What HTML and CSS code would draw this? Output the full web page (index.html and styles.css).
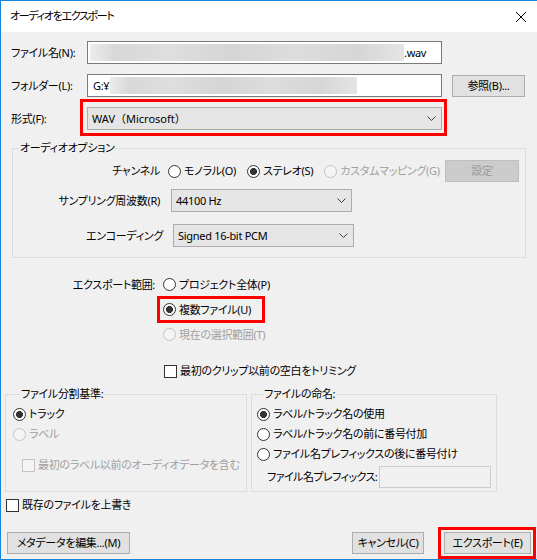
FILE: index.html
```html
<!DOCTYPE html>
<html lang="ja">
<head>
<meta charset="utf-8">
<title>オーディオをエクスポート</title>
<link rel="stylesheet" href="styles.css">
</head>
<body>
<div class="dialog">
  <div class="titlebar">
    <span class="title">オーディオをエクスポート</span>
    <svg class="close" viewBox="0 0 10 10"><path d="M0 0L10 10M10 0L0 10"/></svg>
  </div>
  <div class="body">
    <div class="file-grid">
      <span class="flabel">ファイル名(N):</span>
      <div class="textbox"><span class="blur blur-name"></span><span>.wav</span></div>
      <span></span>
      <span class="flabel">フォルダー(L):</span>
      <div class="textbox"><span class="drive">G:¥</span><span class="blur blur-folder"></span></div>
      <div class="btn btn-browse">参照(B)...</div>
      <span class="flabel">形式(F):</span>
      <div class="combo"><span class="ctext ctext-format">WAV（Microsoft）</span><svg class="chev" viewBox="0 0 9 5"><path d="M.5.5L4.5 4.5L8.5.5"/></svg></div>
    </div>

    <fieldset class="group audio">
      <legend>オーディオオプション</legend>
      <div class="orow orow-channel">
        <span class="olabel">チャンネル</span>
        <span class="opt opt-first"><i class="rb"></i>モノラル(O)</span>
        <span class="opt"><i class="rb on"></i>ステレオ(S)</span>
        <span class="opt dis"><i class="rb"></i>カスタムマッピング(G)</span>
        <div class="btn btn-dis btn-settings">設定</div>
      </div>
      <div class="orow orow-rate">
        <span class="olabel">サンプリング周波数(R)</span>
        <div class="combo combo-rate"><span class="ctext">44100 Hz</span><svg class="chev" viewBox="0 0 9 5"><path d="M.5.5L4.5 4.5L8.5.5"/></svg></div>
      </div>
      <div class="orow orow-enc">
        <span class="olabel olabel-enc">エンコーディング</span>
        <div class="combo combo-enc"><span class="ctext">Signed 16-bit PCM</span><svg class="chev" viewBox="0 0 9 5"><path d="M.5.5L4.5 4.5L8.5.5"/></svg></div>
      </div>
    </fieldset>

    <div class="range">
      <span class="rlabel">エクスポート範囲:</span>
      <div class="ropts">
        <span class="ritem"><i class="rb"></i>プロジェクト全体(P)</span>
        <span class="ritem"><i class="rb on"></i>複数ファイル(U)</span>
        <span class="ritem dis"><i class="rb"></i>現在の選択範囲(T)</span>
      </div>
    </div>

    <div class="check trim"><i class="cb"></i>最初のクリップ以前の空白をトリミング</div>

    <div class="split-row">
      <fieldset class="group split">
        <legend>ファイル分割基準:</legend>
        <div class="grow"><i class="rb on"></i>トラック</div>
        <div class="grow dis"><i class="rb"></i>ラベル</div>
        <div class="grow dis sub"><i class="cb"></i>最初のラベル以前のオーディオデータを含む</div>
      </fieldset>
      <fieldset class="group naming">
        <legend>ファイルの命名:</legend>
        <div class="grow"><i class="rb on"></i>ラベル/トラック名の使用</div>
        <div class="grow"><i class="rb"></i>ラベル/トラック名の前に番号付加</div>
        <div class="grow"><i class="rb"></i>ファイル名プレフィックスの後に番号付け</div>
        <div class="prefix-row">
          <span class="prefix-label">ファイル名プレフィックス:</span>
          <div class="textbox textbox-dis"></div>
        </div>
      </fieldset>
    </div>

    <div class="check overwrite"><i class="cb"></i>既存のファイルを上書き</div>

    <div class="buttons">
      <div class="btn btn-meta">メタデータを編集...(M)</div>
      <div class="btn btn-cancel">キャンセル(C)</div>
      <div class="btn btn-export">エクスポート(E)</div>
    </div>
  </div>

  <div class="hl hl-format"></div>
  <div class="hl hl-multi"></div>
  <div class="hl hl-export"></div>
</div>
</body>
</html>
```

FILE: styles.css
```css
* { box-sizing: border-box; }
html, body { margin: 0; padding: 0; background: #fff; }
body {
  font-family: "Noto Sans", "Noto Sans CJK JP", sans-serif;
  font-size: 11px;
  letter-spacing: -0.3px;
  line-height: 16px;
  color: #000;
  font-feature-settings: "palt";
}
.dialog {
  position: relative;
  width: 537px;
  height: 560px;
  border: 1px solid #1883d7;
  border-right: 0;
  background: #f0f0f0;
  display: flex;
  flex-direction: column;
}
.titlebar {
  flex: none;
  height: 31px;
  background: #fff;
  display: flex;
  align-items: center;
  padding: 0 0 2px 9px;
}
.title {
  letter-spacing: -1.3px;
}
.close {
  width: 10px;
  height: 10px;
  margin-left: auto;
  margin-right: 11px;
  margin-top: 2px;
  stroke: #000;
  stroke-width: 1;
  fill: none;
  overflow: visible;
}
.body {
  flex: 1;
  display: flex;
  flex-direction: column;
  padding-top: 9px;
}

/* top grid */
.file-grid {
  display: grid;
  grid-template-columns: 66px 355px 73px;
  grid-template-rows: 23px 23px 23px;
  column-gap: 10px;
  row-gap: 10px;
  margin-left: 10px;
  align-items: center;
  white-space: nowrap;
}
.textbox {
  height: 23px;
  background: #fff;
  border: 1px solid #7a7a7a;
  display: flex;
  align-items: center;
  padding-left: 2px;
  overflow: hidden;
  white-space: nowrap;
}
.textbox-dis {
  border-color: #cccccc;
  background: #f0f0f0;
}
.blur {
  display: block;
  height: 17px;
  background: linear-gradient(90deg, #ececec 0%, #d8d8d8 8%, #dedede 25%, #d5d5d5 45%, #dddddd 65%, #d6d6d6 85%, #e4e4e4 100%);
}
.blur-name { width: 314px; }
.blur-folder { width: 247px; margin-left: 1px; }
.drive { margin-left: 3px; }
.combo {
  height: 23px;
  background: #e5e5e5;
  border: 1px solid #acacac;
  display: flex;
  align-items: center;
  padding-left: 4px;
  white-space: nowrap;
}
.ctext-format {
  font-feature-settings: normal;
  letter-spacing: 0;
}
.chev {
  width: 9px;
  height: 5px;
  margin-left: auto;
  margin-right: 5px;
  fill: none;
  stroke: #404040;
  stroke-width: 1;
}
.btn {
  height: 22px;
  background: #e1e1e1;
  border: 1px solid #adadad;
  display: flex;
  align-items: center;
  justify-content: center;
  white-space: nowrap;
}
.btn-browse { align-self: end; }
.btn-dis {
  background: #cccccc;
  border-color: #bfbfbf;
  color: #9a9a9a;
}

/* group boxes */
.group {
  margin: 0;
  padding: 0;
  min-width: 0;
  border: 1px solid #dcdcdc;
}
.group legend {
  margin-left: 6px;
  padding: 0 1px;
  line-height: 16px;
}

.audio {
  margin: 10px 0 0 11px;
  width: 514px;
  padding: 0 0 10px 0;
}
.orow {
  display: flex;
  align-items: center;
  white-space: nowrap;
}
.olabel {
  flex: none;
  width: 147px;
  text-align: right;
}
.olabel-enc { width: 150px; }
.orow-channel { margin-top: 4px; height: 22px; }
.orow-rate { margin-top: 7px; }
.orow-enc { margin-top: 12px; }
.opt {
  display: inline-flex;
  align-items: center;
  margin-left: 11px;
}
.opt-first { margin-left: 8px; }
.btn-settings {
  width: 74px;
  margin-left: auto;
  margin-right: 6px;
}
.combo-rate { width: 181px; margin-left: 11px; }
.combo-enc { width: 181px; margin-left: 10px; }

/* radio / checkbox */
.rb {
  flex: none;
  display: inline-block;
  width: 13px;
  height: 13px;
  border: 1px solid #333;
  border-radius: 50%;
  background: #fff;
  margin-right: 3px;
}
.rb.on {
  background: radial-gradient(circle, #333 0, #333 3.2px, #fff 3.8px);
}
.cb {
  flex: none;
  display: inline-block;
  width: 13px;
  height: 13px;
  border: 1px solid #333;
  background: #fff;
  margin-right: 3px;
}
.dis { color: #a0a0a0; }
.dis .rb, .dis .cb {
  border-color: #c4c4c4;
  background: #f4f4f4;
}

/* export range */
.range {
  display: grid;
  grid-template-columns: 154px auto;
  column-gap: 8px;
  margin-top: 14px;
  white-space: nowrap;
}
.rlabel {
  height: 25px;
  display: flex;
  align-items: center;
  justify-content: flex-end;
}
.ropts {
  display: flex;
  flex-direction: column;
}
.ritem {
  height: 25px;
  display: flex;
  align-items: center;
}
.check {
  display: flex;
  align-items: center;
  height: 16px;
  white-space: nowrap;
}
.trim { margin: 16px 0 0 163px; }

/* split groups */
.split-row {
  display: flex;
  gap: 4px;
  margin: 7px 0 0 4px;
}
.split {
  width: 242px;
  padding: 2px 0 0 7px;
}
.split legend { margin-left: 7px; }
.naming {
  width: 246px;
  padding: 2px 0 3px 5px;
}
.grow {
  height: 20px;
  display: flex;
  align-items: center;
  white-space: nowrap;
}
.grow.sub { margin: 11px 0 0 9px; }
.prefix-row {
  display: flex;
  align-items: center;
  margin: 2px 0 0 10px;
  white-space: nowrap;
}
.prefix-label { letter-spacing: -0.55px; }
.prefix-row .textbox {
  width: 112px;
  height: 22px;
  margin-left: auto;
  margin-right: 5px;
}

.overwrite { margin: 5px 0 0 5px; }

.buttons {
  display: flex;
  align-items: center;
  margin-top: 19px;
  padding: 0 6px;
}
.btn-meta { width: 123px; }
.btn-cancel { width: 72px; margin-left: auto; }
.btn-export { width: 87px; margin-left: 20px; }

/* red annotation frames */
.hl {
  position: absolute;
  border: 3px solid #f00;
}
.hl-format { left: 79px; top: 98px; width: 367px; height: 37px; }
.hl-multi { left: 156px; top: 295px; width: 108px; height: 27px; }
.hl-export { left: 437px; top: 526px; width: 98px; height: 32px; }
```
